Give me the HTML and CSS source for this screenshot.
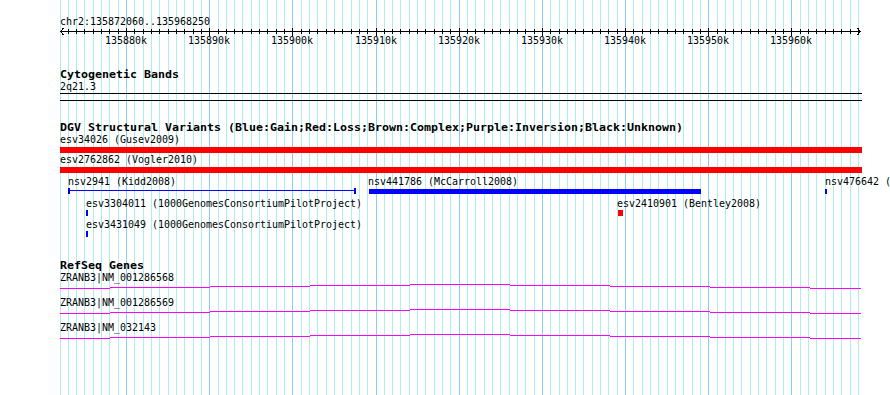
FILE: index.html
```html
<!DOCTYPE html>
<html lang="en">
<head>
    <meta charset="UTF-8">
    <title>chr2:135872060..135968250</title>
    <link rel="stylesheet" href="styles.css">
</head>
<body>
    <div class="browser">
        <svg id="panel" class="panel" width="890" height="395" viewBox="0 0 890 395" xmlns="http://www.w3.org/2000/svg">
            <g id="grid"></g>

            <!-- ruler -->
            <text class="label" x="60" y="25">chr2:135872060..135968250</text>
            <g id="ruler" class="ruler">
                <line x1="60" y1="31.5" x2="861" y2="31.5"/>
                <polyline points="63.5,28 60.5,31.5 63.5,35"/>
                <polyline points="857.5,28 860.5,31.5 857.5,35"/>
            </g>
            <g id="ticks" class="ruler"></g>
            <g id="tick-labels"></g>

            <!-- cytogenetic bands -->
            <text class="title" x="60" y="78">Cytogenetic Bands</text>
            <text class="label" x="60" y="90">2q21.3</text>
            <g class="ruler">
                <line x1="60" y1="93.5" x2="862" y2="93.5"/>
                <line x1="60" y1="100.5" x2="862" y2="100.5"/>
            </g>

            <!-- DGV -->
            <text class="title" x="60" y="131">DGV Structural Variants (Blue:Gain;Red:Loss;Brown:Complex;Purple:Inversion;Black:Unknown)</text>
            <text class="label" x="60" y="143">esv34026 (Gusev2009)</text>
            <rect class="loss" x="60" y="147" width="802" height="6"/>
            <text class="label" x="60" y="163">esv2762862 (Vogler2010)</text>
            <rect class="loss" x="60" y="167" width="802" height="6"/>

            <text class="label" x="68" y="185">nsv2941 (Kidd2008)</text>
            <rect class="gain" x="68" y="188" width="2" height="6"/>
            <rect class="gain" x="68" y="190" width="288" height="1"/>
            <rect class="gain" x="354" y="188" width="2" height="6"/>

            <text class="label" x="368" y="185">nsv441786 (McCarroll2008)</text>
            <rect class="gain" x="369" y="188.5" width="332" height="5.5"/>

            <text class="label" x="825" y="185">nsv476642 (</text>
            <rect class="gain" x="825" y="189" width="2" height="5"/>

            <text class="label" x="86" y="207">esv3304011 (1000GenomesConsortiumPilotProject)</text>
            <rect class="gain" x="86" y="210" width="2" height="6"/>
            <text class="label" x="86" y="228">esv3431049 (1000GenomesConsortiumPilotProject)</text>
            <rect class="gain" x="86" y="231" width="2" height="6"/>

            <text class="label" x="617" y="207">esv2410901 (Bentley2008)</text>
            <rect class="loss" x="618" y="210" width="5" height="6"/>

            <!-- refseq -->
            <text class="title" x="60" y="269">RefSeq Genes</text>
            <text class="label" x="60" y="281">ZRANB3|NM_001286568</text>
            <g class="transcript" data-y="288"></g>
            <text class="label" x="60" y="306">ZRANB3|NM_001286569</text>
            <g class="transcript" data-y="313"></g>
            <text class="label" x="60" y="331">ZRANB3|NM_032143</text>
            <g class="transcript" data-y="338"></g>
        </svg>
    </div>
    <script src="script.js"></script>
</body>
</html>
```

FILE: styles.css
```css
body {
    margin: 0;
    padding: 0;
    background: #fff;
}
.browser {
    width: 890px;
    height: 395px;
    overflow: hidden;
}
.panel {
    display: block;
    shape-rendering: crispEdges;
}
.grid-minor {
    stroke: #afeeee;
    stroke-width: 1;
}
.grid-major {
    stroke: #87cefa;
    stroke-width: 1;
}
.ruler line, .ruler polyline {
    stroke: #000;
    stroke-width: 1;
    fill: none;
}
.label, .title {
    font-family: "DejaVu Sans Mono", "Liberation Mono", monospace;
    font-size: 11px;
    fill: #000;
}
.title {
    font-weight: bold;
}
.loss {
    fill: #f00;
}
.gain {
    fill: #00f;
}
.transcript rect {
    fill: #f0f;
}
```

FILE: script.js
```js
const NS = 'http://www.w3.org/2000/svg';
const start = 135872060;
const end = 135968250;
const left = 60;
const width = 800;

function xOf(pos) {
    return left + (pos - start) * width / (end - start);
}

function add(parent, tag, attrs, text) {
    const el = document.createElementNS(NS, tag);
    for (const k in attrs) el.setAttribute(k, attrs[k]);
    if (text) el.textContent = text;
    parent.appendChild(el);
    return el;
}

const grid = document.getElementById('grid');
const ticks = document.getElementById('ticks');
const tickLabels = document.getElementById('tick-labels');

for (let kb = 135872; kb <= 135968; kb++) {
    const x = Math.round(xOf(kb * 1000)) + 0.5;
    const major = kb % 10 === 0;
    add(grid, 'line', { x1: x, y1: 0, x2: x, y2: 395, class: major ? 'grid-major' : 'grid-minor' });
    if (kb === 135872) continue;
    add(ticks, 'line', { x1: x, y1: major ? 28 : 29, x2: x, y2: major ? 36 : 34 });
    if (major) {
        const label = kb + 'k';
        add(tickLabels, 'text', { class: 'label', x: x - 0.5 - label.length * 3, y: 44 }, label);
    }
}

// transcripts are drawn as stepped segments, 100px each
const steps = [0, -1, -2, -3, -4, -3, -2, -1, 0];
document.querySelectorAll('.transcript').forEach(function (g) {
    const y = parseInt(g.dataset.y);
    steps.forEach(function (dy, i) {
        const x1 = i === 0 ? 60 : 10 + i * 100;
        const x2 = i === steps.length - 1 ? 861 : 110 + i * 100;
        add(g, 'rect', { x: x1, y: y + dy, width: x2 - x1, height: 1 });
    });
});

// fixed cell width, like the bitmap font of the original image
document.querySelectorAll('text').forEach(function (t) {
    const w = t.classList.contains('title') ? 7 : 6;
    t.setAttribute('textLength', t.textContent.length * w);
    t.setAttribute('lengthAdjust', 'spacingAndGlyphs');
});
```
